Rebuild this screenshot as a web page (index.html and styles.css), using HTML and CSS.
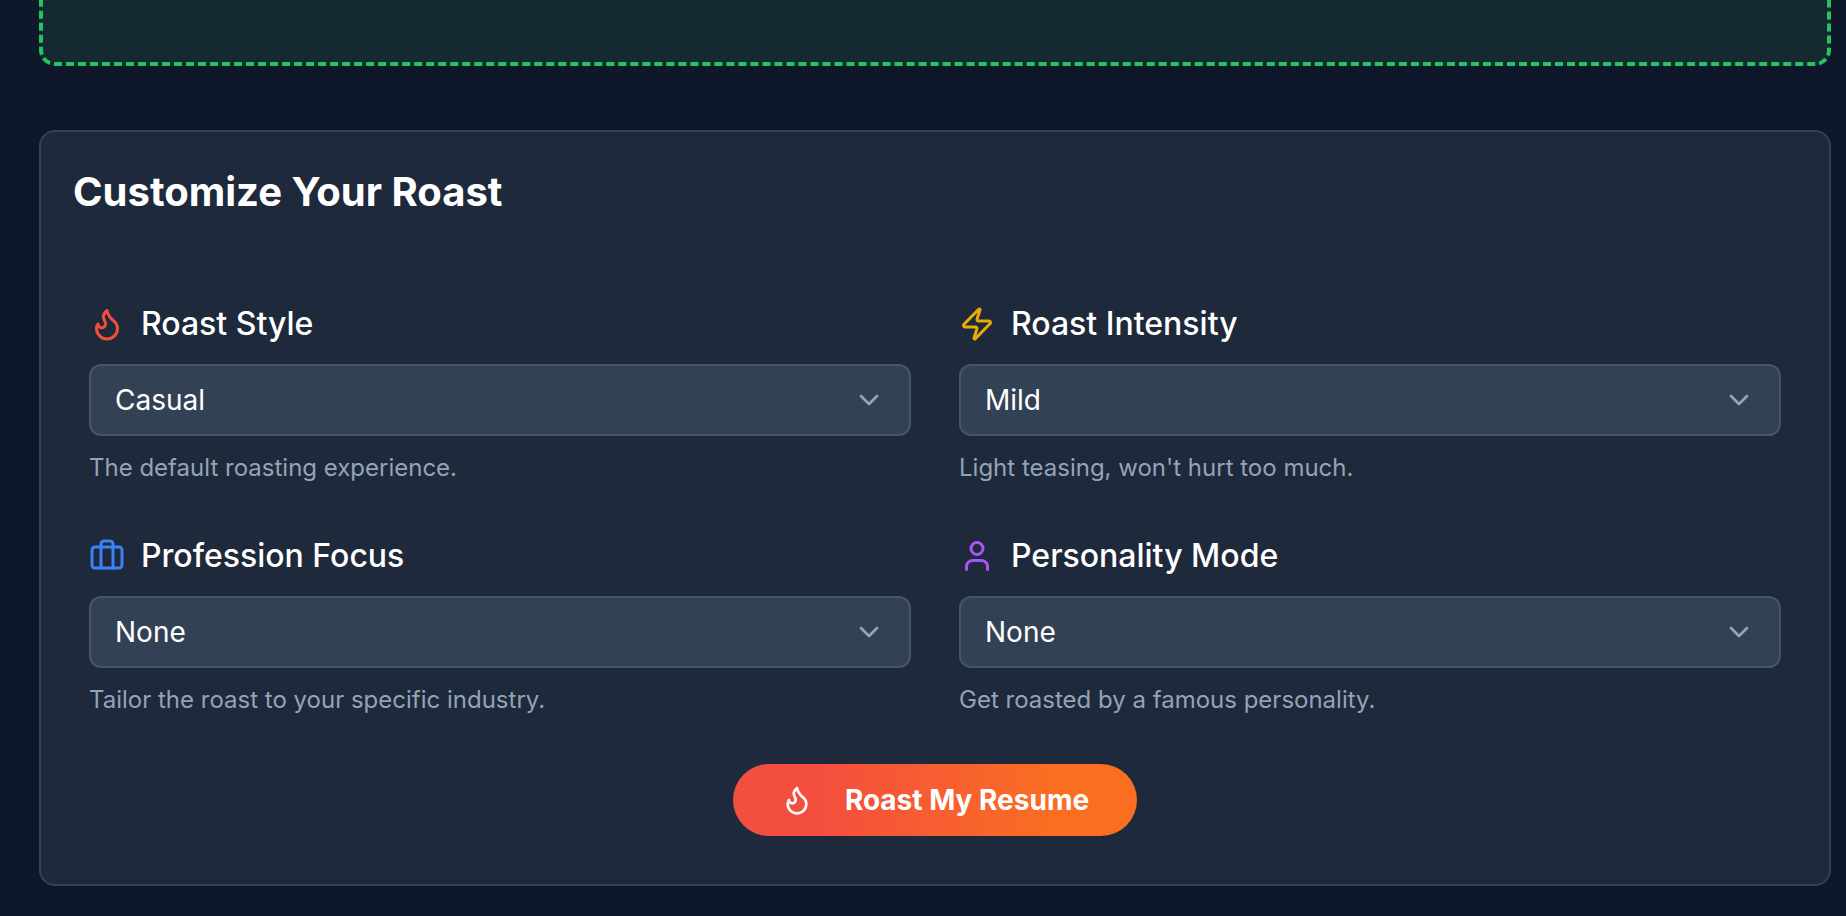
FILE: index.html
```html
<!DOCTYPE html>
<html lang="en">
<head>
    <meta charset="UTF-8">
    <meta name="viewport" content="width=device-width, initial-scale=1.0">
    <title>Roast My Resume</title>
    <link rel="stylesheet" href="styles.css">
</head>
<body>
    <main>
        <div class="dropzone"></div>

        <section class="card">
            <h2>Customize Your Roast</h2>
            <form class="options">
                <div class="options-grid">
                    <div class="field">
                        <label for="roastStyle">
                            <svg class="icon red" viewBox="0 0 24 24"><path d="M8.5 14.5A2.5 2.5 0 0 0 11 12c0-1.38-.5-2-1-3-1.072-2.143-.224-4.054 2-6 .5 2.5 2 4.9 4 6.5 2 1.6 3 3.5 3 5.5a7 7 0 1 1-14 0c0-1.153.433-2.294 1-3a2.5 2.5 0 0 0 2.5 2.5z"/></svg>
                            Roast Style
                        </label>
                        <div class="select-box">
                            <select id="roastStyle">
                                <option>Casual</option>
                            </select>
                            <svg class="chevron" viewBox="0 0 24 24"><path d="m6 9 6 6 6-6"/></svg>
                        </div>
                        <p>The default roasting experience.</p>
                    </div>

                    <div class="field">
                        <label for="roastIntensity">
                            <svg class="icon yellow" viewBox="0 0 24 24"><path d="M4 14a1 1 0 0 1-.78-1.63l9.9-10.2a.5.5 0 0 1 .86.46l-1.92 6.02A1 1 0 0 0 13 10h7a1 1 0 0 1 .78 1.63l-9.9 10.2a.5.5 0 0 1-.86-.46l1.92-6.02A1 1 0 0 0 11 14z"/></svg>
                            Roast Intensity
                        </label>
                        <div class="select-box">
                            <select id="roastIntensity">
                                <option>Mild</option>
                            </select>
                            <svg class="chevron" viewBox="0 0 24 24"><path d="m6 9 6 6 6-6"/></svg>
                        </div>
                        <p>Light teasing, won't hurt too much.</p>
                    </div>

                    <div class="field">
                        <label for="professionFocus">
                            <svg class="icon blue" viewBox="0 0 24 24"><path d="M16 20V4a2 2 0 0 0-2-2h-4a2 2 0 0 0-2 2v16"/><rect width="20" height="14" x="2" y="6" rx="2"/></svg>
                            Profession Focus
                        </label>
                        <div class="select-box">
                            <select id="professionFocus">
                                <option>None</option>
                            </select>
                            <svg class="chevron" viewBox="0 0 24 24"><path d="m6 9 6 6 6-6"/></svg>
                        </div>
                        <p>Tailor the roast to your specific industry.</p>
                    </div>

                    <div class="field">
                        <label for="personalityMode">
                            <svg class="icon purple" viewBox="0 0 24 24"><path d="M19 21v-2a4 4 0 0 0-4-4H9a4 4 0 0 0-4 4v2"/><circle cx="12" cy="7" r="4"/></svg>
                            Personality Mode
                        </label>
                        <div class="select-box">
                            <select id="personalityMode">
                                <option>None</option>
                            </select>
                            <svg class="chevron" viewBox="0 0 24 24"><path d="m6 9 6 6 6-6"/></svg>
                        </div>
                        <p>Get roasted by a famous personality.</p>
                    </div>
                </div>

                <button type="button">
                    <svg viewBox="0 0 24 24"><path d="M8.5 14.5A2.5 2.5 0 0 0 11 12c0-1.38-.5-2-1-3-1.072-2.143-.224-4.054 2-6 .5 2.5 2 4.9 4 6.5 2 1.6 3 3.5 3 5.5a7 7 0 1 1-14 0c0-1.153.433-2.294 1-3a2.5 2.5 0 0 0 2.5 2.5z"/></svg>
                    Roast My Resume
                </button>
            </form>
        </section>
    </main>
</body>
</html>
```
FILE: styles.css
```css
* {
    box-sizing: border-box;
}
body {
    margin: 0;
    background-color: #0f172a;
    color: white;
    font-family: Inter, "Liberation Sans", sans-serif;
}
main {
    padding: 0 15px 30px 39px;
}
/* upper part sits above the top of the page */
.dropzone {
    height: 306px;
    margin-top: -240px;
    border: 4px dashed #22c55e;
    border-radius: 16px;
    background-color: #152a30;
}
.card {
    margin-top: 64px;
    border: 2px solid #334155;
    border-radius: 16px;
    background-color: #1e293b;
}
h2 {
    margin: 0;
    padding: 32px;
    font-size: 40px;
    line-height: 56px;
    font-weight: bold;
}
.options {
    display: flex;
    flex-direction: column;
    align-items: center;
    gap: 48px;
    padding: 48px;
}
.options-grid {
    display: grid;
    grid-template-columns: 1fr 1fr;
    gap: 48px;
    width: 100%;
}
svg {
    fill: none;
    stroke: currentColor;
    stroke-width: 2;
    stroke-linecap: round;
    stroke-linejoin: round;
}
label {
    display: flex;
    align-items: center;
    gap: 16px;
    margin-bottom: 16px;
    font-size: 32px;
    line-height: 48px;
    font-weight: 500;
}
.icon {
    width: 36px;
    height: 36px;
}
.red {
    color: #f24e3e;
}
.yellow {
    color: #eaaa08;
}
.blue {
    color: #3b82f6;
}
.purple {
    color: #a855f7;
}
.select-box {
    position: relative;
}
select {
    display: block;
    width: 100%;
    height: 72px;
    padding: 0 24px;
    appearance: none;
    border: 2px solid #475569;
    border-radius: 12px;
    background-color: #334155;
    color: white;
    font-family: inherit;
    font-size: 28px;
}
.chevron {
    position: absolute;
    top: 20px;
    right: 26px;
    width: 32px;
    height: 32px;
    color: #94a3b8;
    pointer-events: none;
}
.field p {
    margin: 16px 0 0;
    color: #94a3b8;
    font-size: 24px;
    line-height: 32px;
}
button {
    display: flex;
    align-items: center;
    gap: 32px;
    height: 72px;
    padding: 0 48px;
    border: none;
    border-radius: 36px;
    background: linear-gradient(to right, #f44e3f 20%, #fa6e22 80%);
    color: white;
    font-family: inherit;
    font-size: 28px;
    font-weight: bold;
}
button svg {
    width: 32px;
    height: 32px;
}
```
